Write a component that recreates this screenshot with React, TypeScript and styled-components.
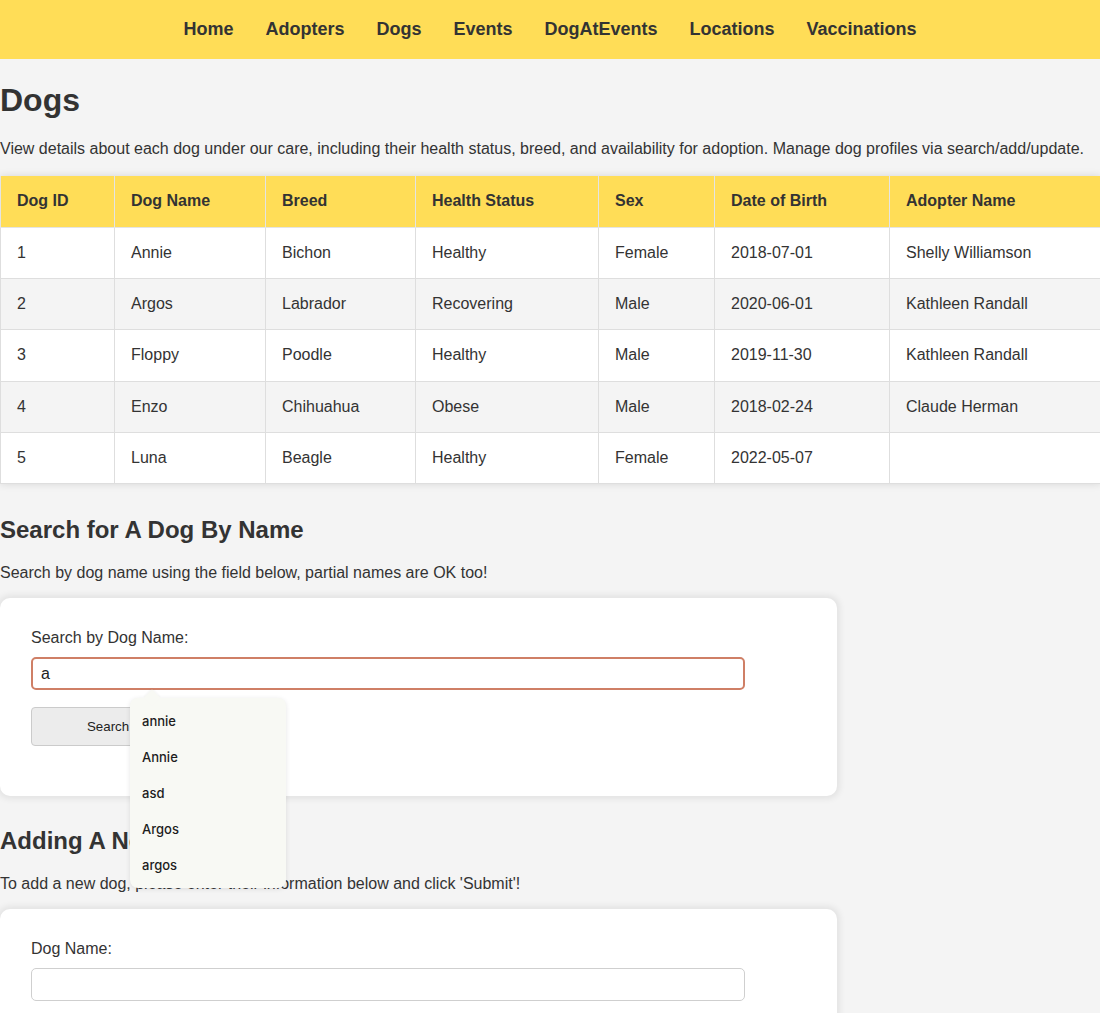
import React from "react";
import styled, {createGlobalStyle} from "styled-components";

const GlobalStyle = createGlobalStyle`
  body {
    margin: 0;
    background: #f4f4f4;
    color: #333;
    font-family: "Liberation Sans", Arial, sans-serif;
  }
`;

const NavBar = styled.nav`
  display: flex;
  justify-content: center;
  align-items: center;
  height: 59px;
  background: #ffdd57;
`;

const NavLink = styled.a`
  margin: 0 16px;
  font-size: 18px;
  font-weight: bold;
  color: #333;
  text-decoration: none;
`;

const Main = styled.main`
  display: flow-root;
`;

const Title = styled.h1`
  font-size: 32px;
  margin: 23px 0 21px;
`;

const SectionTitle = styled.h2`
  font-size: 24px;
  margin: 20px 0;
`;

const Text = styled.p`
  font-size: 16px;
  margin: 16px 0;
`;

const Table = styled.table`
  width: 100%;
  table-layout: fixed;
  border-collapse: collapse;
  background: #fff;
  box-shadow: 0 0 8px rgba(0, 0, 0, 0.12);
  margin: 18px 0 32px;
  font-size: 16px;
`;

const HeadCell = styled.th<{ $w: number }>`
  box-sizing: border-box;
  width: ${p => p.$w}px;
  background: #ffdd57;
  text-align: left;
  padding: 16px;
  height: 51px;
  border: 1px solid #e4e4e4;
  border-top: none;
`;

const Row = styled.tr<{ $alt: boolean }>`
  background: ${p => (p.$alt ? "#f4f4f4" : "#fff")};
`;

const Cell = styled.td`
  padding: 16px;
  border: 1px solid #dedede;
  height: 18.4px;
`;

const Card = styled.div`
  width: 837px;
  box-sizing: border-box;
  background: #fff;
  border-radius: 10px;
  box-shadow: 0 0 6px 3px rgba(0, 0, 0, 0.07);
  padding: 31px 31px 50px;
  margin-bottom: 31px;
`;

const Label = styled.label`
  display: block;
  font-size: 16px;
  margin-bottom: 10px;
`;

const InputWrap = styled.div`
  position: relative;
  width: 714px;
`;

const Input = styled.input<{ $focus?: boolean }>`
  box-sizing: border-box;
  width: 714px;
  height: 33px;
  padding: 6px 8px;
  font-size: 16px;
  font-family: "Liberation Sans", Arial, sans-serif;
  color: #222;
  border: ${p => (p.$focus ? "2px solid #cf7f66" : "1px solid #cfcfcf")};
  border-radius: 5px;
  outline: none;
  background: #fff;
`;

const Button = styled.button`
  margin-top: 17px;
  height: 39px;
  width: 156px;
  font-family: "Liberation Sans", Arial, sans-serif;
  font-size: 13.3px;
  color: #222;
  background: #ececec;
  border: 1px solid #cbcbcb;
  border-radius: 4px;
  text-align: left;
  padding-left: 55px;
`;

const Suggestions = styled.ul`
  position: absolute;
  top: 41px;
  left: 99px;
  width: 156px;
  box-sizing: border-box;
  margin: 0;
  padding: 5px 0;
  list-style: none;
  background: #f8f9f4;
  border-radius: 8px;
  box-shadow: 0 1px 5px rgba(0, 0, 0, 0.1);
  z-index: 2;

  &::before {
    content: "";
    position: absolute;
    top: -6px;
    left: 16px;
    width: 12px;
    height: 12px;
    background: #f8f9f4;
    transform: rotate(45deg);
    box-shadow: -1px -1px 2px rgba(0, 0, 0, 0.04);
  }
`;

const Suggestion = styled.li`
  position: relative;
  padding: 0 12px;
  height: 36px;
  line-height: 36px;
  font-family: Inter, "Noto Sans", sans-serif;
  font-size: 13px;
  font-weight: 500;
  color: #1d1d1d;
`;

const columns = [
    {name: "Dog ID", w: 114},
    {name: "Dog Name", w: 151},
    {name: "Breed", w: 150},
    {name: "Health Status", w: 183},
    {name: "Sex", w: 116},
    {name: "Date of Birth", w: 175},
    {name: "Adopter Name", w: 211},
];

const dogs = [
    ["1", "Annie", "Bichon", "Healthy", "Female", "2018-07-01", "Shelly Williamson"],
    ["2", "Argos", "Labrador", "Recovering", "Male", "2020-06-01", "Kathleen Randall"],
    ["3", "Floppy", "Poodle", "Healthy", "Male", "2019-11-30", "Kathleen Randall"],
    ["4", "Enzo", "Chihuahua", "Obese", "Male", "2018-02-24", "Claude Herman"],
    ["5", "Luna", "Beagle", "Healthy", "Female", "2022-05-07", ""],
];

const links = ["Home", "Adopters", "Dogs", "Events", "DogAtEvents", "Locations", "Vaccinations"];
const matches = ["annie", "Annie", "asd", "Argos", "argos"];

const App: React.FC = () => {
    return (
        <>
            <GlobalStyle/>
            <NavBar>
                {links.map(l => <NavLink key={l} href="#">{l}</NavLink>)}
            </NavBar>
            <Main>
                <Title>Dogs</Title>
                <Text>
                    View details about each dog under our care, including their health status, breed, and availability for adoption. Manage dog profiles via search/add/update.
                </Text>
                <Table>
                    <thead>
                    <tr>
                        {columns.map(c => <HeadCell key={c.name} $w={c.w}>{c.name}</HeadCell>)}
                    </tr>
                    </thead>
                    <tbody>
                    {dogs.map((d, idx) => (
                        <Row key={d[0]} $alt={idx % 2 === 1}>
                            {d.map((v, i) => <Cell key={i}>{v}</Cell>)}
                        </Row>
                    ))}
                    </tbody>
                </Table>

                <SectionTitle>Search for A Dog By Name</SectionTitle>
                <Text>Search by dog name using the field below, partial names are OK too!</Text>
                <Card>
                    <Label>Search by Dog Name:</Label>
                    <InputWrap>
                        <Input $focus defaultValue="a"/>
                        <Suggestions>
                            {matches.map(m => <Suggestion key={m}>{m}</Suggestion>)}
                        </Suggestions>
                    </InputWrap>
                    <Button type="button">Search</Button>
                </Card>

                <SectionTitle>Adding A New Dog</SectionTitle>
                <Text>To add a new dog, please enter their information below and click 'Submit'!</Text>
                <Card>
                    <Label>Dog Name:</Label>
                    <Input/>
                </Card>
            </Main>
        </>
    );
};

export default App;
